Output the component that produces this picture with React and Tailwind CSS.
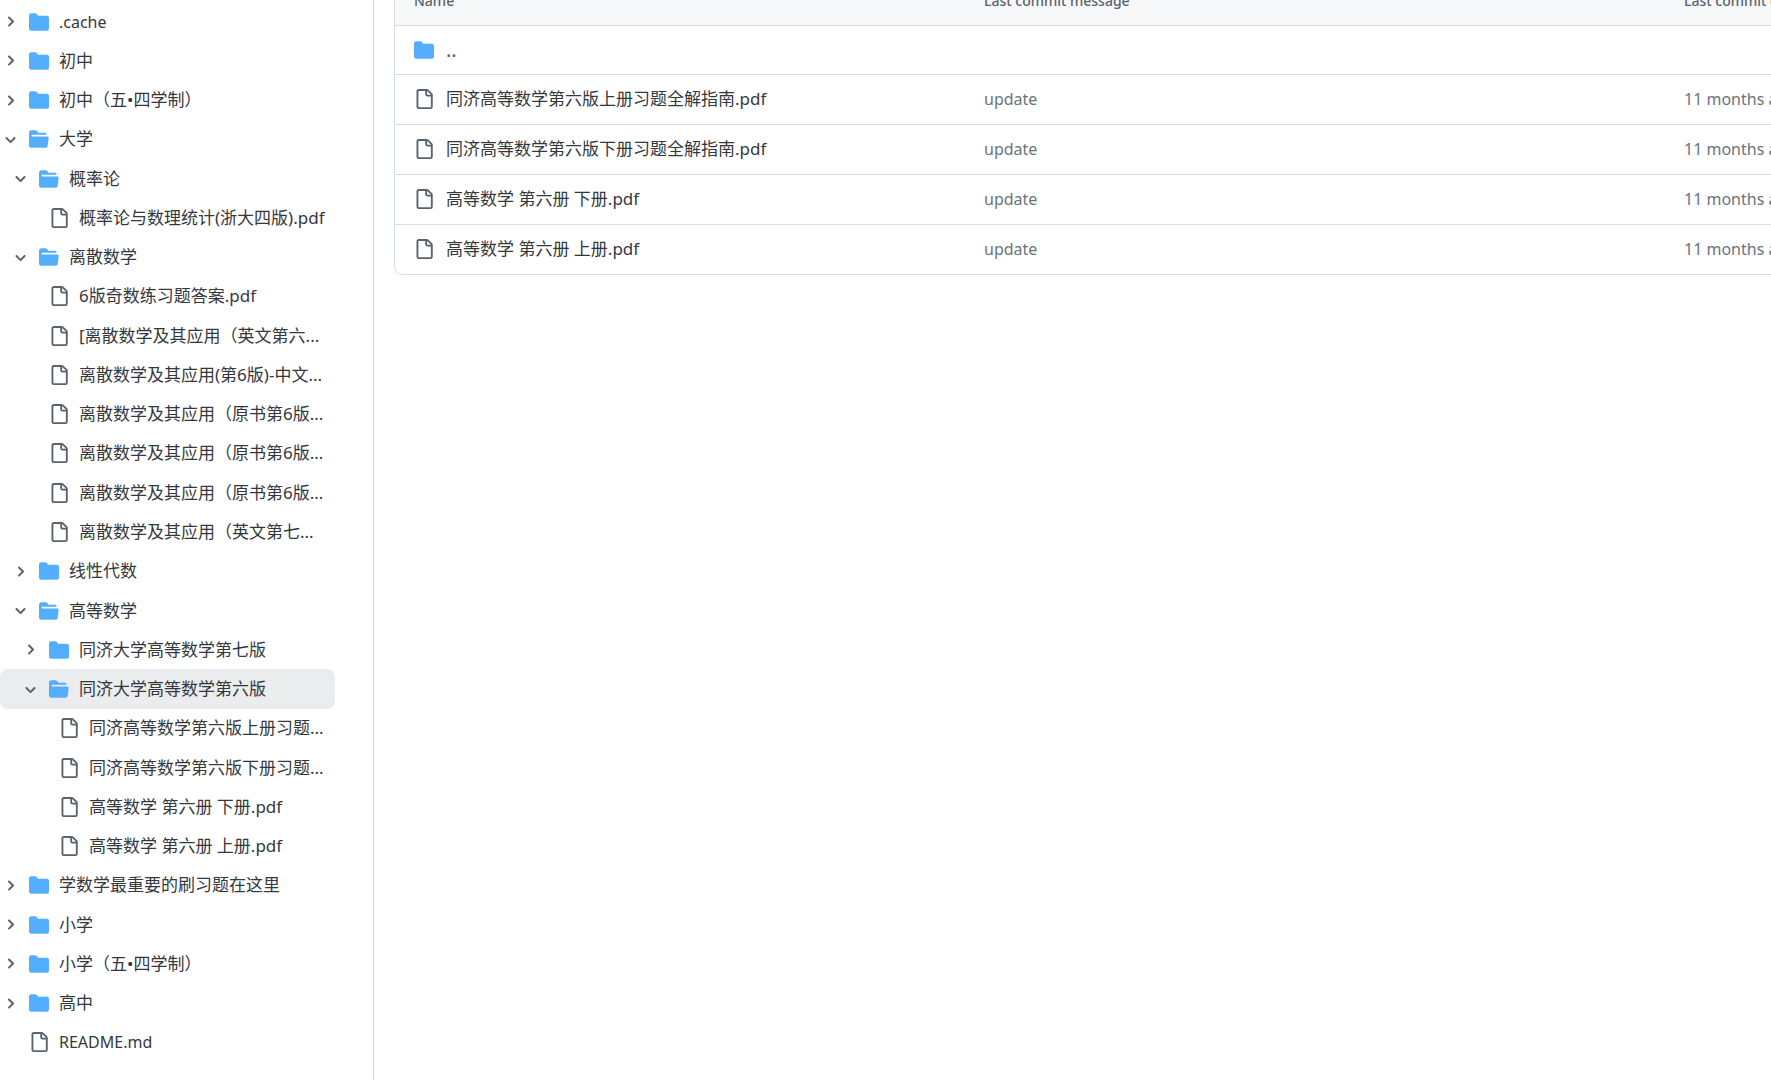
import { useState } from "react";
import clsx from "clsx";

const tree = [
  { name: ".cache", level: 0, type: "dir" },
  { name: "初中", level: 0, type: "dir" },
  { name: "初中（五•四学制）", level: 0, type: "dir" },
  { name: "大学", level: 0, type: "dir", open: true },
  { name: "概率论", level: 1, type: "dir", open: true },
  { name: "概率论与数理统计(浙大四版).pdf", level: 2, type: "file" },
  { name: "离散数学", level: 1, type: "dir", open: true },
  { name: "6版奇数练习题答案.pdf", level: 2, type: "file" },
  { name: "[离散数学及其应用（英文第六...", level: 2, type: "file" },
  { name: "离散数学及其应用(第6版)-中文...", level: 2, type: "file" },
  { name: "离散数学及其应用（原书第6版...", level: 2, type: "file" },
  { name: "离散数学及其应用（原书第6版...", level: 2, type: "file" },
  { name: "离散数学及其应用（原书第6版...", level: 2, type: "file" },
  { name: "离散数学及其应用（英文第七...", level: 2, type: "file" },
  { name: "线性代数", level: 1, type: "dir" },
  { name: "高等数学", level: 1, type: "dir", open: true },
  { name: "同济大学高等数学第七版", level: 2, type: "dir" },
  { name: "同济大学高等数学第六版", level: 2, type: "dir", open: true },
  { name: "同济高等数学第六版上册习题...", level: 3, type: "file" },
  { name: "同济高等数学第六版下册习题...", level: 3, type: "file" },
  { name: "高等数学 第六册 下册.pdf", level: 3, type: "file" },
  { name: "高等数学 第六册 上册.pdf", level: 3, type: "file" },
  { name: "学数学最重要的刷习题在这里", level: 0, type: "dir" },
  { name: "小学", level: 0, type: "dir" },
  { name: "小学（五•四学制）", level: 0, type: "dir" },
  { name: "高中", level: 0, type: "dir" },
  { name: "README.md", level: 0, type: "file" },
];

const files = [
  "同济高等数学第六版上册习题全解指南.pdf",
  "同济高等数学第六版下册习题全解指南.pdf",
  "高等数学 第六册 下册.pdf",
  "高等数学 第六册 上册.pdf",
];

const indent = ["pl-0", "pl-[10px]", "pl-[20px]", "pl-[30px]"];

const isLatin = (name) => /^[\x20-\x7e]+$/.test(name);

const FolderIcon = () => (
  <svg viewBox="0 0 16 16" className="size-5 shrink-0 fill-[#54aeff]" aria-hidden="true">
    <path d="M1.75 1A1.75 1.75 0 0 0 0 2.75v10.5C0 14.216.784 15 1.75 15h12.5A1.75 1.75 0 0 0 16 13.25v-8.5A1.75 1.75 0 0 0 14.25 3H7.5a.25.25 0 0 1-.2-.1l-.9-1.2C6.07 1.26 5.55 1 5 1H1.75Z" />
  </svg>
);

const FolderOpenIcon = () => (
  <svg viewBox="0 0 16 16" className="size-5 shrink-0 fill-[#54aeff]" aria-hidden="true">
    <path d="M.513 1.513A1.75 1.75 0 0 1 1.75 1h3.5c.55 0 1.07.26 1.4.7l.9 1.2a.25.25 0 0 0 .2.1H13a1 1 0 0 1 1 1v.5H2.75a.75.75 0 0 0 0 1.5h11.978a1 1 0 0 1 .994 1.117L15 13.25A1.75 1.75 0 0 1 13.25 15H1.75A1.75 1.75 0 0 1 0 13.25V2.75c0-.464.184-.91.513-1.237Z" />
  </svg>
);

const FileIcon = () => (
  <svg viewBox="0 0 16 16" className="size-5 shrink-0 fill-[#59636e]" aria-hidden="true">
    <path d="M2 1.75C2 .784 2.784 0 3.75 0h6.586c.464 0 .909.184 1.237.513l2.914 2.914c.329.328.513.773.513 1.237v9.586A1.75 1.75 0 0 1 13.25 16h-9.5A1.75 1.75 0 0 1 2 14.25Zm1.75-.25a.25.25 0 0 0-.25.25v12.5c0 .138.112.25.25.25h9.5a.25.25 0 0 0 .25-.25V6h-2.75A1.75 1.75 0 0 1 9 4.25V1.5Zm6.75.062V4.25c0 .138.112.25.25.25h2.688l-.011-.013-2.914-2.914-.013-.011Z" />
  </svg>
);

const Chevron = ({ open }) => (
  <svg viewBox="0 0 12 12" className="size-[15px] fill-[#59636e]" aria-hidden="true">
    {open ? (
      <path d="M6 8.825c-.2 0-.4-.1-.5-.2l-3.3-3.3c-.3-.3-.3-.8 0-1.1.3-.3.8-.3 1.1 0l2.7 2.7 2.7-2.7c.3-.3.8-.3 1.1 0 .3.3.3.8 0 1.1l-3.2 3.2c-.2.2-.4.3-.6.3Z" />
    ) : (
      <path d="M4.7 10c-.2 0-.4-.1-.5-.2-.3-.3-.3-.8 0-1.1L6.9 6 4.2 3.3c-.3-.3-.3-.8 0-1.1.3-.3.8-.3 1.1 0l3.3 3.2c.3.3.3.8 0 1.1L5.3 9.7c-.2.2-.4.3-.6.3Z" />
    )}
  </svg>
);

const TreeRow = ({ item, selected, onSelect }) => (
  <li className={clsx("flex items-center rounded-lg pr-2", indent[item.level], selected && "bg-[#eaeced]")}>
    {item.type === "dir" ? (
      <button type="button" aria-label="Toggle" aria-expanded={!!item.open} className="flex w-[21px] shrink-0 justify-center">
        <Chevron open={item.open} />
      </button>
    ) : (
      <span className="w-[21px] shrink-0" />
    )}
    <a href="#" onClick={onSelect} className="ml-2 flex min-w-0 flex-1 items-center gap-2.5">
      {item.type === "file" ? <FileIcon /> : item.open ? <FolderOpenIcon /> : <FolderIcon />}
      <span className={clsx("whitespace-nowrap", isLatin(item.name) ? "text-base" : "text-[17px]")}>{item.name}</span>
    </a>
  </li>
);

const App = () => {
  const [selected, setSelected] = useState(17);

  return (
    <div className="flex min-h-screen bg-white font-['Noto_Sans','Noto_Sans_CJK_SC',sans-serif] text-[#34383d]">
      <nav className="flex w-[374px] shrink-0 border-r border-[#d1d5d9] pt-0.5 pr-[38px] pb-[18px]" aria-label="Files">
        <ul className="grid flex-1 auto-rows-fr grid-cols-1 leading-6">
          {tree.map((item, index) => (
            <TreeRow key={index} item={item} selected={selected === index} onSelect={() => setSelected(index)} />
          ))}
        </ul>
      </nav>

      <main className="min-w-0 flex-1 overflow-hidden pl-5">
        <div className="-mt-6 w-[1450px] overflow-hidden rounded-lg border border-[#d8dde1]">
          <table className="w-full table-fixed border-collapse text-left leading-6">
            <thead className="bg-[#f6f8fa] text-sm text-[#59636e]">
              <tr className="h-12">
                <th className="w-[569px] pr-5 pl-[19px] font-medium">Name</th>
                <th className="w-[700px] px-5 font-medium">Last commit message</th>
                <th className="px-5 font-medium">Last commit date</th>
              </tr>
            </thead>
            <tbody>
              <tr className="h-[49px] border-t border-[#d8dde1]">
                <td colSpan={3} className="pr-5 pl-[19px]">
                  <a href="#" className="flex items-center gap-3">
                    <FolderIcon />
                    <span className="text-xl leading-6 text-[#59636e]">..</span>
                  </a>
                </td>
              </tr>
              {files.map((name) => (
                <tr key={name} className="h-[50px] border-t border-[#d8dde1]">
                  <td className="pr-5 pl-[19px]">
                    <a href="#" className="flex items-center gap-3 text-[17px]">
                      <FileIcon />
                      <span className="whitespace-nowrap">{name}</span>
                    </a>
                  </td>
                  <td className="px-5 text-[#6b737c]">update</td>
                  <td className="px-5 whitespace-nowrap text-[#6b737c]">11 months ago</td>
                </tr>
              ))}
            </tbody>
          </table>
        </div>
      </main>
    </div>
  );
};

export default App;
